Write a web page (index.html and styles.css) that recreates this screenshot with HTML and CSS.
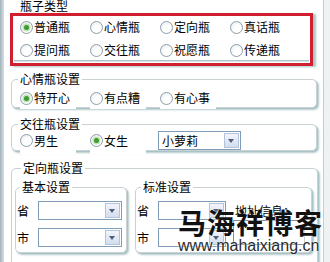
FILE: index.html
```html
<!DOCTYPE html>
<html lang="zh-CN">
<head>
    <meta charset="UTF-8">
    <meta name="viewport" content="width=device-width, initial-scale=1.0">
    <title>瓶子设置</title>
    <link rel="stylesheet" href="styles.css">
</head>
<body>
    <div class="window">
        <div class="edge-left"></div>
        <div class="main">
            <div class="type-title">瓶子类型</div>
            <div class="type-box">
                <div class="type-grid">
                    <label class="radio checked"><span class="dot"></span>普通瓶</label>
                    <label class="radio"><span class="dot"></span>心情瓶</label>
                    <label class="radio"><span class="dot"></span>定向瓶</label>
                    <label class="radio"><span class="dot"></span>真话瓶</label>
                    <label class="radio"><span class="dot"></span>提问瓶</label>
                    <label class="radio"><span class="dot"></span>交往瓶</label>
                    <label class="radio"><span class="dot"></span>祝愿瓶</label>
                    <label class="radio"><span class="dot"></span>传递瓶</label>
                </div>
            </div>

            <div class="group mood">
                <div class="group-title">心情瓶设置</div>
                <div class="row">
                    <label class="radio checked"><span class="dot"></span>特开心</label>
                    <label class="radio"><span class="dot"></span>有点糟</label>
                    <label class="radio"><span class="dot"></span>有心事</label>
                </div>
            </div>

            <div class="group dating">
                <div class="group-title">交往瓶设置</div>
                <div class="row row-combo">
                    <label class="radio"><span class="dot"></span>男生</label>
                    <label class="radio checked"><span class="dot"></span>女生</label>
                    <div class="combo combo-girl">小萝莉<span class="drop"></span></div>
                </div>
            </div>

            <div class="group direct">
                <div class="group-title">定向瓶设置</div>
                <div class="sub-row">
                    <div class="group sub sub-basic">
                        <div class="group-title">基本设置</div>
                        <div class="fields">
                            <span class="field-label">省</span>
                            <div class="combo combo-basic"><span class="drop"></span></div>
                            <span class="field-label">市</span>
                            <div class="combo combo-basic"><span class="drop"></span></div>
                        </div>
                    </div>
                    <div class="group sub sub-std">
                        <div class="group-title">标准设置</div>
                        <div class="std-body">
                            <div class="fields">
                                <span class="field-label">省</span>
                                <div class="combo combo-std"><span class="drop"></span></div>
                                <span class="field-label">市</span>
                                <div class="combo combo-std"><span class="drop"></span></div>
                            </div>
                            <div class="address">
                                <div class="address-label">地址信息：</div>
                                <div class="address-box"></div>
                            </div>
                        </div>
                    </div>
                </div>
            </div>
        </div>
        <div class="edge-right"></div>

        <div class="watermark">
            <div class="wm-name">马海祥博客</div>
            <div class="wm-url">www.mahaixiang.cn</div>
        </div>
    </div>
</body>
</html>
```

FILE: styles.css
```css
body {
    margin: 0;
    font-family: "Noto Sans CJK SC", sans-serif;
    font-size: 12px;
    color: #000;
    background: #fff;
}
.window {
    position: relative;
    display: flex;
    width: 330px;
    height: 262px;
    overflow: hidden;
}
.edge-left {
    width: 4px;
    background: linear-gradient(to right, #9fb4bb, #d7e1e4);
}
.main {
    width: 319px;
}
.edge-right {
    width: 6px;
    border-left: 1px solid #c3ced2;
    background: #eef2f3;
}

/* bottle type box, outlined in red */
.type-title {
    margin: -1px 0 0 16px;
    height: 14px;
    line-height: 14px;
}
.type-box {
    margin-left: 6px;
    width: 303px;
    box-sizing: border-box;
    border: 3px solid #cf1f2e;
    padding: 0 1px 2px;
    box-shadow: 3px 1px 2px rgba(90, 140, 145, 0.5);
}
.type-grid {
    display: grid;
    grid-template-columns: repeat(4, 70px);
    row-gap: 7px;
    padding: 3px 0 2px 6px;
    border-bottom: 1px solid #a9c3c6;
    box-shadow: 0 1px 0 #d8e5e6;
}

/* radio buttons */
.radio {
    display: flex;
    align-items: center;
    gap: 1px;
    height: 16px;
    line-height: 16px;
    white-space: nowrap;
}
.dot {
    display: flex;
    align-items: center;
    justify-content: center;
    width: 13px;
    height: 13px;
    box-sizing: border-box;
    border: 1px solid #8e9ea9;
    border-radius: 50%;
    background: radial-gradient(circle at 60% 65%, #fff 35%, #e1e7ea);
}
.checked .dot::after {
    content: "";
    width: 5px;
    height: 5px;
    border-radius: 50%;
    background: #3e9a32;
    box-shadow: 0 0 0 1.5px #c3e4b5;
}

/* group boxes */
.group {
    margin-left: 7px;
    width: 306px;
    box-sizing: border-box;
    border: 1px solid #c9d1d5;
    border-radius: 5px;
    background: #fff;
    box-shadow: 1px 1px 0 #a9c4c6, 2px 2px 2px rgba(90, 140, 145, 0.45);
}
.group-title {
    width: fit-content;
    margin: -8px 0 0 6px;
    padding: 0 2px;
    line-height: 14px;
    background: #fff;
}
.row {
    display: grid;
    grid-template-columns: repeat(3, 70px);
    align-items: center;
    padding-left: 8px;
}
.row .radio {
    width: 56px;
    background: #fff;
    padding-bottom: 3px;
    margin-bottom: -3px;
}
.mood {
    margin-top: 13px;
    padding-bottom: 1px;
}
.mood .row {
    margin-top: 4px;
}
.dating {
    margin-top: 16px;
}
.row-combo {
    grid-template-columns: 70px 70px auto;
    height: 19px;
}
.row-combo .radio {
    padding-bottom: 5px;
    margin-bottom: -5px;
}

/* combo boxes */
.combo {
    position: relative;
    height: 19px;
    box-sizing: border-box;
    border: 1px solid #7f9db9;
    padding-left: 3px;
    line-height: 17px;
    background: #fff;
}
.drop {
    position: absolute;
    top: 1px;
    right: 1px;
    width: 15px;
    height: 15px;
    box-sizing: border-box;
    border: 1px solid #b3c3d9;
    background: linear-gradient(#f2f5fb, #d3ddee);
}
.drop::after {
    content: "";
    position: absolute;
    left: 3px;
    top: 5px;
    border-left: 3.5px solid transparent;
    border-right: 3.5px solid transparent;
    border-top: 4px solid #4d5d7a;
}
.combo-girl {
    width: 83px;
    margin-left: -2px;
}
.combo-basic {
    width: 84px;
}
.combo-std {
    width: 68px;
}

/* directed bottle */
.direct {
    margin-top: 17px;
    width: 307px;
    height: 120px;
    padding-left: 3px;
}
.sub-row {
    display: flex;
    gap: 8px;
    margin-top: 12px;
}
.sub {
    margin-left: 0;
    padding-bottom: 5px;
}
.sub-basic {
    width: 112px;
}
.sub-basic .group-title {
    margin-left: 4px;
}
.sub-std {
    width: 177px;
}
.sub-std .group-title {
    margin-left: 5px;
}
.fields {
    display: grid;
    grid-template-columns: 21px auto;
    row-gap: 8px;
    align-items: center;
    margin-top: 7px;
    padding-left: 1px;
}
.field-label {
    line-height: 19px;
}
.std-body {
    display: flex;
}
.address {
    margin: 7px 0 0 7px;
}
.address-label {
    padding-left: 2px;
    line-height: 19px;
}
.address-box {
    width: 72px;
    height: 25px;
    box-sizing: border-box;
    border: 1px solid #7f8a94;
    border-right-color: #c9d1d5;
}

/* watermark */
.watermark {
    position: absolute;
    left: 178px;
    top: 207px;
    pointer-events: none;
}
.wm-name {
    font-size: 28px;
    line-height: 30px;
    font-weight: 700;
    letter-spacing: 1px;
    color: #111;
    text-shadow: 0 0 2px #fff;
}
.wm-url {
    margin-top: 1px;
    font-family: "Liberation Sans", Arial, sans-serif;
    font-size: 16px;
    line-height: 16px;
    color: #2b2b2b;
    text-shadow: 0 0 2px #fff, 0 0 1px #fff;
}
```
